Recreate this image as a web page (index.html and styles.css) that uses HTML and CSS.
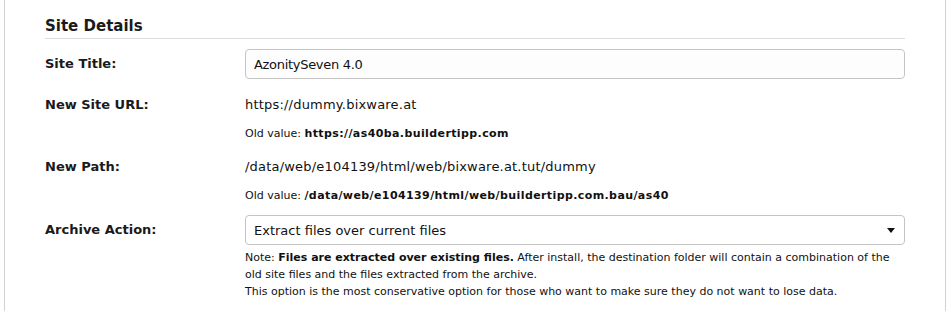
FILE: index.html
```html
<!DOCTYPE html>
<html lang="en">
<head>
    <meta charset="UTF-8">
    <title>Site Details</title>
    <link rel="stylesheet" href="styles.css">
</head>
<body>
    <div class="panel">
        <h2 class="section-title">Site Details</h2>

        <div class="row row-input">
            <label class="label" for="site-title">Site Title:</label>
            <div class="value">
                <input type="text" id="site-title" class="text-input" value="AzonitySeven 4.0">
            </div>
        </div>

        <div class="row">
            <div class="label">New Site URL:</div>
            <div class="value">
                <div class="plain">https://dummy.bixware.at</div>
                <div class="old-value">Old value: <b>https://as40ba.buildertipp.com</b></div>
            </div>
        </div>

        <div class="row">
            <div class="label">New Path:</div>
            <div class="value">
                <div class="plain">/data/web/e104139/html/web/bixware.at.tut/dummy</div>
                <div class="old-value">Old value: <b>/data/web/e104139/html/web/buildertipp.com.bau/as40</b></div>
            </div>
        </div>

        <div class="row row-select">
            <div class="label">Archive Action:</div>
            <div class="value">
                <div class="select">
                    <span>Extract files over current files</span>
                    <svg class="caret" width="8" height="5" viewBox="0 0 8 5"><path d="M0 0h8L4 5z" fill="#111"/></svg>
                </div>
                <div class="note">
                    Note: <b>Files are extracted over existing files.</b> After install, the destination folder will contain a combination of the old site files and the files extracted from the archive.<br>
                    This option is the most conservative option for those who want to make sure they do not want to lose data.
                </div>
            </div>
        </div>
    </div>
</body>
</html>
```

FILE: styles.css
```css
body {
    margin: 0;
    background-color: #fff;
    font-family: "DejaVu Sans", Verdana, sans-serif;
    color: #111;
}
.panel {
    margin: 0 5px 0 4px;
    min-height: 311px;
    box-sizing: border-box;
    border-left: 1px solid #d2d2d2;
    border-right: 1px solid #d2d2d2;
    padding: 16px 40px 0 40px;
}
.section-title {
    margin: 0 0 10px 0;
    padding-bottom: 2px;
    border-bottom: 1px solid #dcdcdc;
    font-size: 15px;
    font-weight: bold;
    line-height: 20px;
    color: #1a1a1a;
}
.row {
    display: flex;
    margin-bottom: 16px;
}
.row-input {
    margin-bottom: 17px;
}
.label {
    width: 200px;
    flex-shrink: 0;
    font-size: 13px;
    font-weight: bold;
    line-height: 18px;
    color: #1a1a1a;
}
.row-input .label,
.row-select .label {
    line-height: 30px;
}
.row-select {
    margin-top: -5px;
}
.value {
    flex: 1;
}
.text-input {
    display: block;
    width: 100%;
    height: 30px;
    box-sizing: border-box;
    margin: 0;
    padding: 0 8px;
    border: 1px solid #c4c4c4;
    border-radius: 4px;
    background-color: #fdfdfd;
    font-family: inherit;
    font-size: 13px;
    letter-spacing: -0.3px;
    color: #111;
}
.plain {
    font-size: 13px;
    line-height: 18px;
    letter-spacing: 0.2px;
}
.old-value {
    margin-top: 12px;
    font-size: 11px;
    line-height: 16px;
}
.old-value b {
    letter-spacing: 0.4px;
}
.select {
    display: flex;
    justify-content: space-between;
    align-items: center;
    height: 30px;
    box-sizing: border-box;
    padding: 0 8px;
    border: 1px solid #c4c4c4;
    border-radius: 4px;
    background-color: #fff;
    font-size: 13px;
}
.caret {
    margin-right: 1px;
}
.note {
    margin-top: 4px;
    padding-right: 10px;
    font-size: 11px;
    line-height: 17px;
}
```
